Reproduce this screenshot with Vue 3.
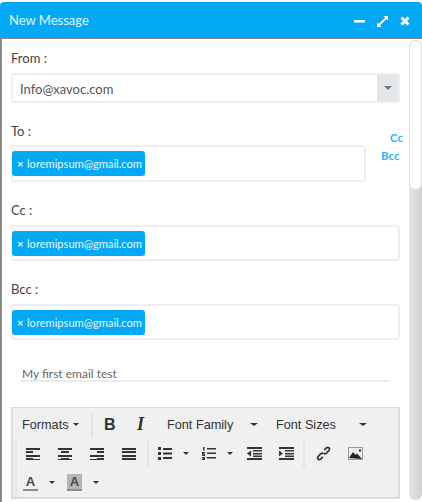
<script setup>
const email = 'loremipsum@gmail.com'
const lines = {
  left: [[0, 14], [0, 7], [0, 14], [0, 7]],
  center: [[0, 14], [3, 8], [0, 14], [3, 8]],
  right: [[0, 14], [7, 7], [0, 14], [7, 7]],
  full: [[0, 14], [0, 14], [0, 14], [0, 14]],
}
</script>

<template>
  <div class="page">
    <div class="top-strip"><span>0 181</span></div>
    <div class="window">
      <header class="title-bar">
        <span class="title">New Message</span>
        <div class="win-icons">
          <svg width="11" height="11" viewBox="0 0 11 11"><rect x="0" y="4" width="11" height="2.500" fill="#fff" /></svg>
          <svg width="11" height="11" viewBox="0 0 11 11"><path d="M6.500 0H11v4.500L9.400 2.900 2.900 9.400 4.500 11H0V6.500l1.600 1.600 6.500-6.500z" fill="#fff" /></svg>
          <svg width="10" height="10" viewBox="0 0 10 10"><path d="M1.500 1.500l7 7m0-7l-7 7" stroke="#fff" stroke-width="3" /></svg>
        </div>
      </header>

      <div class="content">
        <main class="form">
          <label class="label first">From :</label>
          <div class="select">
            <span class="select-text">Info@xavoc.com</span>
            <span class="select-arrow"><i class="caret grey"></i></span>
          </div>

          <div class="to-row">
            <div class="to-field">
              <label class="label to-label">To :</label>
              <div class="tag-box to-box">
                <span class="chip"><b>×</b>{{ email }}</span>
              </div>
            </div>
            <div class="links">
              <a class="cc">Cc</a>
              <a class="bcc">Bcc</a>
            </div>
          </div>

          <label class="label">Cc :</label>
          <div class="tag-box">
            <span class="chip"><b>×</b>{{ email }}</span>
          </div>

          <label class="label">Bcc :</label>
          <div class="tag-box">
            <span class="chip"><b>×</b>{{ email }}</span>
          </div>

          <div class="subject">My first email test</div>

          <div class="editor">
            <div class="tb-row">
              <div class="group formats">
                <span class="drop">Formats</span><i class="caret small"></i>
              </div>
              <div class="group styles">
                <span class="bold">B</span>
                <span class="italic">I</span>
              </div>
              <span class="drop family">Font Family</span><i class="caret family-caret"></i>
              <span class="drop sizes">Font Sizes</span><i class="caret sizes-caret"></i>
            </div>

            <div class="tb-row">
              <div class="group aligns">
                <svg v-for="(set, name) in lines" :key="name" class="ico" width="14" height="12" viewBox="0 0 14 12">
                  <rect v-for="(l, i) in set" :key="i" :x="l[0]" :y="i * 3 + (i > 1 ? 1 : 0)" :width="l[1]" height="2" fill="#333" />
                  <rect v-if="name !== 'full'" x="0" y="11" width="14" height="1" fill="#333" />
                </svg>
              </div>
              <div class="group lists">
                <svg class="ico-list" width="14" height="13" viewBox="0 0 14 13">
                  <path d="M0 0h3v3H0zM0 5h3v3H0zM0 10h3v3H0zM5 1h9v2H5zM5 5.500h9v2H5zM5 10h9v2H5z" fill="#333" />
                </svg>
                <i class="caret list-caret"></i>
                <svg class="ico-list num" width="14" height="13" viewBox="0 0 14 13">
                  <path d="M1 0h1.500v3.500H1zM0 5h3v1.200H1.500v.6H3V9H0V7.800h1.500v-.6H0zM0 10h3v3H0v-1h1.500v-.4H.6v-.6h.9V11H0zM5 1h9v1.500H5zM5 5.500h9V7H5zM5 10h9v1.500H5z" fill="#333" />
                </svg>
                <i class="caret list-caret"></i>
                <svg class="ico-indent" width="15" height="13" viewBox="0 0 15 13">
                  <path d="M0 0h15v2H0zM6 3h9v1.500H6zM6 6h9v1.500H6zM6 8.500h9V10H6zM0 11h15v2H0zM4 3.500v6L0 6.500z" fill="#333" />
                </svg>
                <svg class="ico-indent next" width="15" height="13" viewBox="0 0 15 13">
                  <path d="M0 0h15v2H0zM6 3h9v1.500H6zM6 6h9v1.500H6zM6 8.500h9V10H6zM0 11h15v2H0zM0 3.500v6l4-3z" fill="#333" />
                </svg>
              </div>
              <div class="group media">
                <svg width="15" height="15" viewBox="0 0 15 15" fill="none" stroke="#333" stroke-width="1.700">
                  <path d="M8.200 4.300l2-2.200c.9-.9 2.100-.9 2.800-.2s.7 2 -.2 2.800l-2.400 2.400c-.9.800-2 .8-2.700.1" />
                  <path d="M6.800 10.700l-2 2.200c-.9.900-2.100.9-2.800.2s-.7-2 .2-2.800l2.400-2.400c.9-.8 2-.8 2.700-.1" />
                </svg>
                <svg class="image-ico" width="15" height="13" viewBox="0 0 15 13">
                  <path d="M0 0h15v13H0z" fill="#999" />
                  <path d="M1 1h13v11H1z" fill="#eee" />
                  <path d="M1 11l4-6 2.500 3L9 6.500l5 5.500z M11 2.500h2v2h-2z" fill="#222" />
                </svg>
              </div>
            </div>

            <div class="tb-row">
              <div class="group colors">
                <span class="color-a">A</span>
                <i class="caret color-caret"></i>
                <span class="color-a filled">A</span>
                <i class="caret color-caret"></i>
              </div>
            </div>
          </div>
        </main>

        <aside class="scrollbar">
          <div class="thumb"></div>
        </aside>
      </div>
    </div>
  </div>
</template>

<style>
html, body {
  margin: 0;
  background: #fff;
  overflow: hidden;
}
</style>

<style scoped>
* {
  box-sizing: border-box;
}

.page {
  width: 422px;
  height: 502px;
  overflow: hidden;
  font-family: Lato, sans-serif;
  color: #444;
}

.top-strip {
  height: 2px;
  overflow: hidden;
  display: flex;
  justify-content: flex-end;
  align-items: flex-end;
  padding-right: 10px;
  font-size: 13px;
  line-height: 13px;
  letter-spacing: 1px;
  color: #333;
}

.window {
  height: 500px;
  display: flex;
  flex-direction: column;
}

.title-bar {
  height: 37px;
  flex: none;
  background: #03a9f4;
  border-bottom: 1px solid #8a8a8a;
  border-radius: 4px 4px 0 0;
  display: flex;
  align-items: center;
  justify-content: space-between;
  padding: 0 12px 0 9px;
  color: #e4f5fe;
  font-size: 13px;
}

.title {
  margin-top: -1px;
}

.win-icons {
  display: flex;
  align-items: center;
  gap: 12px;
  margin-top: 2px;
}

.content {
  flex: 1;
  min-height: 0;
  display: flex;
  border-left: 2px solid #8a8a8a;
}

.form {
  width: 407px;
  flex: none;
  padding: 0 9px;
}

.label {
  display: block;
  margin: 19px 0 6px;
  height: 18px;
  line-height: 18px;
  font-size: 13px;
  color: #444;
}

.label.first {
  margin-top: 10px;
  margin-bottom: 6px;
}

.label.to-label {
  margin-bottom: 5px;
}

.select {
  height: 30px;
  display: flex;
  border: 2px solid #eceff2;
  border-radius: 3px;
  align-items: stretch;
  justify-content: space-between;
}

.select-text {
  padding-left: 7px;
  font-size: 13px;
  line-height: 29px;
  color: #555;
}

.select-arrow {
  width: 21px;
  background: #e4e7ea;
  display: flex;
  align-items: center;
  justify-content: center;
}

.caret {
  display: inline-block;
  width: 0;
  height: 0;
  border-left: 4px solid transparent;
  border-right: 4px solid transparent;
  border-top: 4px solid #333;
}

.caret.grey {
  border-top-color: #777;
}

.to-row {
  display: flex;
}

.to-field {
  width: 355px;
  flex: none;
}

.links {
  flex: 1;
  position: relative;
  font-size: 11.500px;
  font-weight: 700;
  color: #2eb3f6;
}

.cc {
  position: absolute;
  left: 24px;
  top: 28px;
}

.bcc {
  position: absolute;
  left: 15px;
  top: 46px;
}

.tag-box {
  height: 36px;
  border: 2px solid #eceff2;
  border-radius: 3px;
  padding: 4px 0 0 0;
  display: flex;
  align-items: flex-start;
}

.to-box {
  height: 37px;
}

.chip {
  height: 25px;
  width: 133px;
  margin-left: -1px;
  background: #03a9f4;
  border-radius: 3px;
  color: #e6f6fe;
  font-size: 11.100px;
  line-height: 25px;
  padding-left: 5px;
  white-space: nowrap;
}

.chip b {
  display: inline-block;
  width: 10px;
  font-size: 11px;
}

.subject {
  margin: 24px 10px 0 10px;
  height: 18px;
  border-bottom: 2px solid #ececec;
  font-size: 12px;
  line-height: 20px;
  color: #666;
  padding-left: 1px;
}

.editor {
  margin-top: 25px;
  height: 92px;
  width: 389px;
  background: #f0f0f0;
  border: 2px solid #dcdcdc;
  border-top-width: 1px;
  font-family: "Liberation Sans", Arial, sans-serif;
  font-size: 12.700px;
  color: #333;
  padding-top: 2px;
}

.tb-row {
  height: 29px;
  display: flex;
  align-items: center;
  padding-left: 2px;
}

.group {
  height: 26px;
  display: flex;
  align-items: center;
  flex: none;
}

.formats {
  width: 78px;
  padding-left: 7px;
  border-right: 2px solid #e3e3e3;
}

.small {
  margin-left: 4px;
  border-width: 3px 3px 0;
}

.styles {
  padding-left: 11px;
  width: 74px;
}

.bold {
  font-weight: 700;
  font-size: 16px;
  width: 33px;
  color: #333;
}

.italic {
  font-family: "Liberation Serif", serif;
  font-weight: 700;
  font-style: italic;
  font-size: 18px;
  color: #333;
}

.drop {
  white-space: nowrap;
}

.family {
  width: 79px;
}

.family-caret {
  margin: 0 18px 0 4px;
  border-width: 3px 4px 0;
}

.sizes {
  width: 83px;
}

.sizes-caret {
  border-width: 3px 4px 0;
}

.aligns {
  border-left: 2px solid #e3e3e3;
  width: 134px;
  padding-left: 9px;
  border-right: 2px solid #e3e3e3;
  gap: 18px;
}

.lists {
  width: 156px;
  padding-left: 9px;
  border-right: 2px solid #e3e3e3;
}

.list-caret {
  margin-left: 11px;
  border-width: 3px 3px 0;
}

.num {
  margin-left: 13px;
}

.ico-indent {
  margin-left: 14px;
}

.ico-indent.next {
  margin-left: 17px;
}

.media {
  padding-left: 11px;
}

.image-ico {
  margin-left: 17px;
}

.colors {
  border-left: 2px solid #e3e3e3;
  padding-left: 6px;
  height: 28px;
}

.color-a {
  width: 15px;
  height: 17px;
  font-size: 13px;
  font-weight: 700;
  line-height: 15px;
  text-align: center;
  color: #3a4a5c;
  border-bottom: 2px solid #8c8c8c;
}

.color-a.filled {
  background: #b5b5b5;
  margin-left: 12px;
}

.color-caret {
  margin-left: 11px;
  border-width: 3px 3px 0;
}

.scrollbar {
  width: 13px;
  flex: none;
  height: 460px;
  margin-top: 1px;
  background: linear-gradient(to right, #e6e6e6, #d0d0d0);
  border-radius: 6px;
}

.thumb {
  height: 150px;
  background: #fff;
  border: 1px solid #dedede;
  border-radius: 6px;
}
</style>
